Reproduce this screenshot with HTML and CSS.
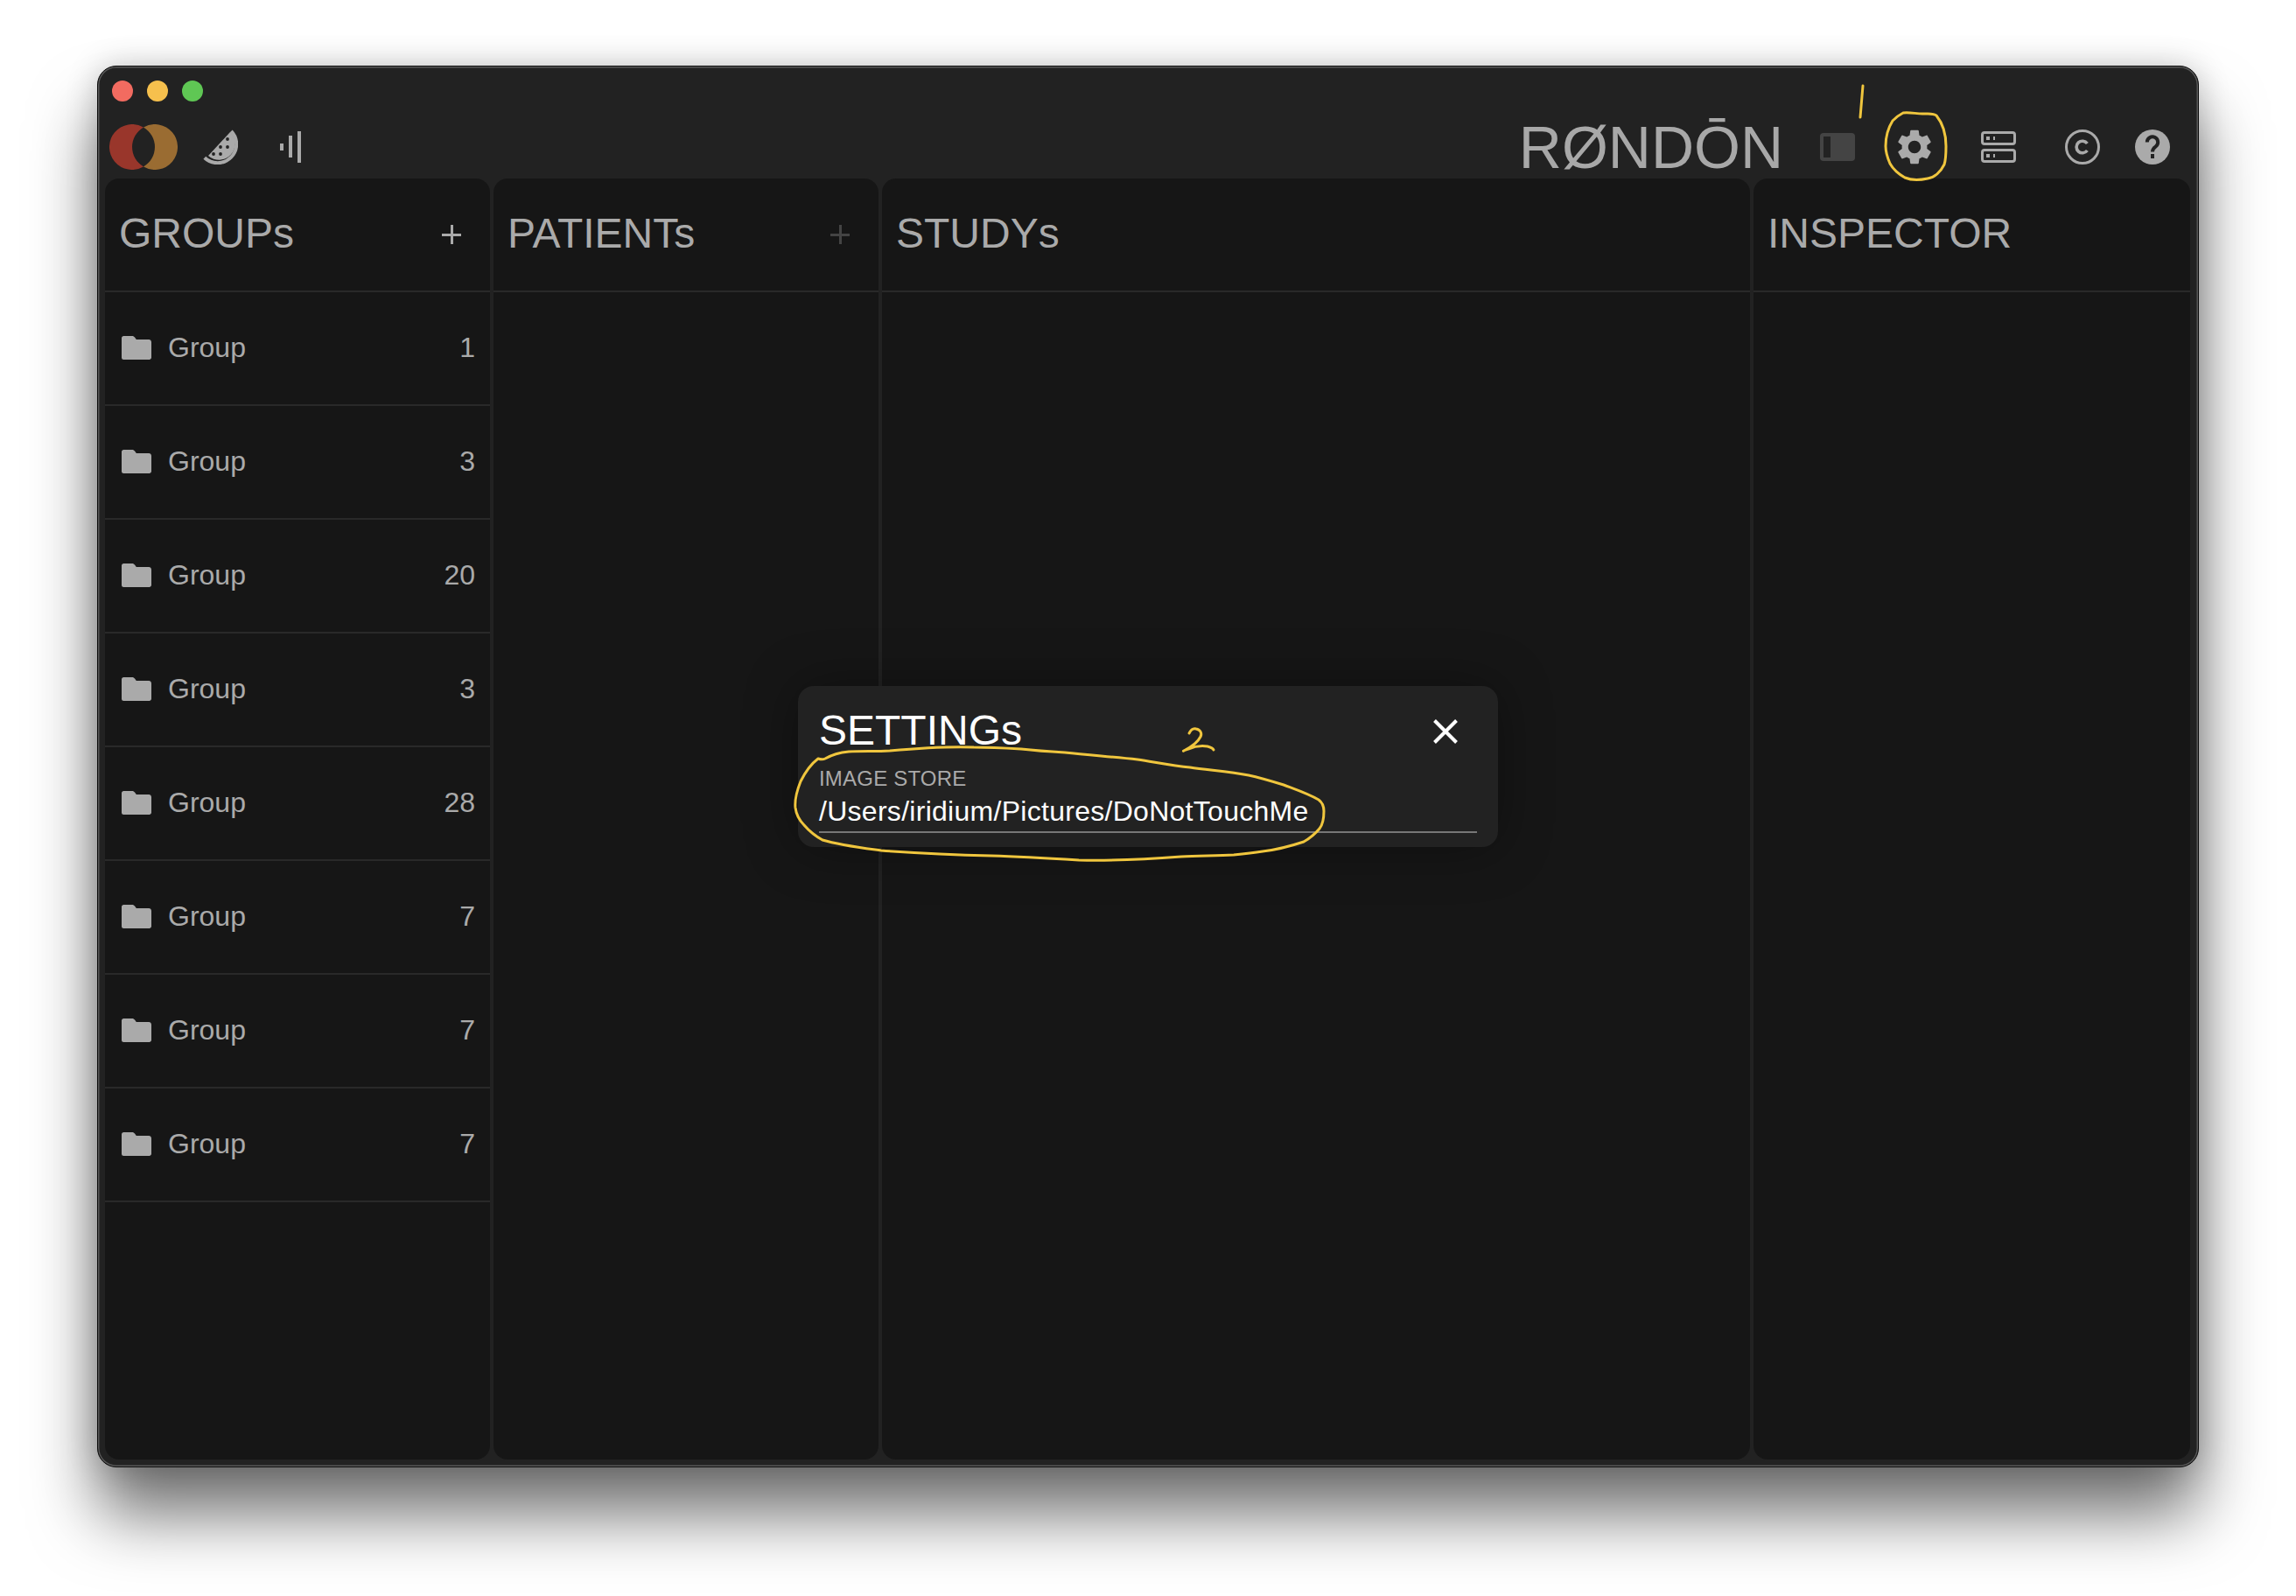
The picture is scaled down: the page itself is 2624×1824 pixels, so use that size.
FILE: index.html
```html
<!DOCTYPE html>
<html lang="en">
<head>
<meta charset="utf-8">
<title>RØNDŌN</title>
<link rel="stylesheet" href="styles.css">
</head>
<body>
<svg width="0" height="0" class="defs">
  <symbol id="folder" viewBox="0 0 34 27"><path d="M2.5 0H12c1.4 0 2.2.6 3 1.6L16.8 4H31c1.7 0 3 1.3 3 3v17.5c0 1.4-1.1 2.5-2.5 2.5h-29A2.5 2.5 0 0 1 0 24.5v-22A2.500 2.500 0 0 1 2.500 0z"/></symbol>
</svg>
<div class="window">
  <div class="titlebar">
    <span class="light red"></span><span class="light yellow"></span><span class="light green"></span>
  </div>
  <div class="toolbar">
    <div class="tools-left">
      <svg class="logo" viewBox="0 0 78 52"><path class="logo-red" d="M39 3.500A26 26 0 1 0 39 48.500A26 26 0 0 1 39 3.500z"/><path class="logo-orange" d="M39 3.500A26 26 0 1 1 39 48.500A26 26 0 0 0 39 3.500z"/></svg>
      <svg class="melon" viewBox="0 0 40 40"><path class="melon-rind" d="M32.200 1.800A21.500 21.500 0 0 1 1.800 32.200"/><path class="melon-flesh" d="M6 30L31 3A18.400 18.400 0 0 1 6 30z"/><circle class="seed" cx="20" cy="20" r="1.900"/><circle class="seed" cx="28" cy="11" r="1.900"/><circle class="seed" cx="28" cy="20" r="1.900"/><circle class="seed" cx="12" cy="28" r="1.900"/><circle class="seed" cx="20" cy="28" r="1.900"/></svg>
      <svg class="bars" viewBox="0 0 24 36"><rect x="0" y="14" width="4" height="8"/><rect x="10" y="5" width="4" height="25"/><rect x="20" y="0" width="4" height="36"/></svg>
    </div>
    <div class="tools-right">
      <span class="brand">RØNDŌN</span>
      <svg class="tool toggle" viewBox="0 0 40 32"><rect class="toggle-bg" width="40" height="32" rx="4"/><rect class="toggle-bar" x="4" y="4" width="8" height="24"/></svg>
      <svg class="tool gear" viewBox="0 0 24 24"><path d="M19.140 12.940c.04-.3.06-.61.06-.94 0-.32-.02-.64-.07-.94l2.030-1.580c.18-.14.23-.41.12-.61l-1.920-3.320c-.12-.22-.37-.29-.59-.22l-2.390.96c-.5-.38-1.030-.7-1.620-.94l-.36-2.540c-.04-.24-.24-.41-.48-.41h-3.840c-.24 0-.43.17-.47.41l-.36 2.540c-.59.24-1.130.57-1.620.94l-2.390-.96c-.22-.08-.47 0-.59.22L2.740 8.870c-.12.21-.08.47.12.61l2.030 1.580c-.05.3-.09.63-.09.94s.02.64.07.94l-2.030 1.580c-.18.14-.23.41-.12.61l1.920 3.320c.12.22.37.29.59.22l2.390-.96c.5.38 1.030.7 1.620.94l.36 2.540c.05.24.24.41.48.41h3.840c.24 0 .44-.17.47-.41l.36-2.540c.59-.24 1.130-.56 1.620-.94l2.390.96c.22.08.47 0 .59-.22l1.920-3.320c.12-.22.07-.47-.12-.61l-2.010-1.580zM12 15.600c-1.980 0-3.600-1.620-3.600-3.600s1.620-3.600 3.600-3.600 3.600 1.620 3.600 3.600-1.620 3.600-3.600 3.600z"/></svg>
      <svg class="tool server" viewBox="0 0 40 36"><rect class="outline" x="1.500" y="1.500" width="37" height="13" rx="2.500"/><rect class="outline" x="1.500" y="21.500" width="37" height="13" rx="2.500"/><rect x="6" y="6" width="4" height="4"/><rect x="14" y="6" width="2" height="4"/><rect x="6" y="26" width="4" height="4"/><rect x="14" y="26" width="2" height="4"/></svg>
      <svg class="tool copy" viewBox="0 0 40 40"><circle class="outline" cx="20" cy="20" r="18.500"/><path class="outline thick" d="M25.400 16A6.800 6.800 0 1 0 25.400 24"/></svg>
      <svg class="tool help" viewBox="0 0 40 40"><circle cx="20" cy="20" r="20"/><path class="help-mark" d="M13.800 14.500A6.200 6.200 0 1 1 23.500 19.600C21 21.300 20 22.300 20 25.500"/><rect class="help-dot" x="18" y="28" width="4" height="5"/></svg>
    </div>
  </div>
  <div class="panels">
    <section class="panel panel-groups">
      <header class="panel-head"><h2>GROUPs</h2><span class="plus"></span></header>
      <div class="row"><svg class="folder"><use href="#folder"/></svg><span class="row-name">Group</span><span class="row-count">1</span></div>
      <div class="row"><svg class="folder"><use href="#folder"/></svg><span class="row-name">Group</span><span class="row-count">3</span></div>
      <div class="row"><svg class="folder"><use href="#folder"/></svg><span class="row-name">Group</span><span class="row-count">20</span></div>
      <div class="row"><svg class="folder"><use href="#folder"/></svg><span class="row-name">Group</span><span class="row-count">3</span></div>
      <div class="row"><svg class="folder"><use href="#folder"/></svg><span class="row-name">Group</span><span class="row-count">28</span></div>
      <div class="row"><svg class="folder"><use href="#folder"/></svg><span class="row-name">Group</span><span class="row-count">7</span></div>
      <div class="row"><svg class="folder"><use href="#folder"/></svg><span class="row-name">Group</span><span class="row-count">7</span></div>
      <div class="row"><svg class="folder"><use href="#folder"/></svg><span class="row-name">Group</span><span class="row-count">7</span></div>
    </section>
    <section class="panel panel-patients">
      <header class="panel-head"><h2>PATIENTs</h2><span class="plus dim"></span></header>
    </section>
    <section class="panel panel-studies">
      <header class="panel-head"><h2>STUDYs</h2></header>
    </section>
    <section class="panel panel-inspector">
      <header class="panel-head"><h2>INSPECTOR</h2></header>
    </section>
  </div>
  <div class="dialog">
    <div class="dialog-head">
      <h1>SETTINGs</h1>
      <svg class="close" viewBox="0 0 28 28"><path d="M1.500 1.500L26.500 26.500M26.500 1.500L1.500 26.500"/></svg>
    </div>
    <div class="field-label">IMAGE STORE</div>
    <div class="field-value">/Users/iridium/Pictures/DoNotTouchMe</div>
  </div>
</div>
<svg class="ink" viewBox="0 0 2624 1824">
  <path d="M2129 98C2128 110 2127 122 2126 134"/>
  <path d="M2175 129C2182 128 2190 130 2197 130C2204 130 2210 129 2213 132C2221 142 2224 155 2224 167C2224 176 2224 182 2222 188C2218 196 2211 203 2203 204C2194 206 2184 206 2177 203C2170 199 2164 194 2160 187C2157 180 2155 174 2155 167C2155 156 2158 146 2163 138C2167 134 2171 131 2175 129Z"/>
  <path d="M1359 838C1361 834 1364 832 1367 833C1372 834 1374 838 1372 842C1369 848 1361 854 1353 858C1351 859 1354 857 1358 856C1365 853 1374 852 1380 853C1384 854 1386 855 1387 857"/>
  <path d="M935 867C938 868 941 868 943 867C950 863 960 860 970 859C985 858 1000 859 1017 858C1050 855 1085 853 1113 854C1133 854 1150 855 1167 856C1185 858 1200 859 1217 860C1245 863 1272 865 1300 868C1320 871 1340 875 1360 877C1380 880 1405 882 1427 886C1441 889 1454 893 1467 897C1480 902 1495 907 1507 914C1511 917 1513 922 1513 927C1513 935 1512 942 1508 947C1503 953 1497 958 1490 962C1475 967 1460 971 1443 973C1430 975 1420 976 1410 977C1390 978 1370 978 1350 979C1310 982 1270 984 1233 983C1200 981 1165 979 1133 978C1090 977 1048 975 1007 972C985 969 960 966 940 960C931 955 925 950 919 943C913 937 910 931 909 923C908 913 911 903 915 893C920 883 927 873 935 867Z"/>
</svg>
</body>
</html>
```

FILE: styles.css
```css
html, body {
  margin: 0;
  padding: 0;
  background: #fff;
}

body {
  width: 2624px;
  height: 1824px;
  overflow: hidden;
  position: relative;
  box-sizing: border-box;
  padding: 75px 0 0 111px;
  font-family: "Liberation Sans", Arial, sans-serif;
}

.defs {
  position: absolute;
}

.window {
  position: relative;
  box-sizing: border-box;
  width: 2402px;
  height: 1602px;
  display: flex;
  flex-direction: column;
  background: #222;
  border: 1px solid #0c0c0c;
  border-radius: 22px;
  box-shadow: inset 0 0 0 1.5px #585858, 0 55px 75px rgba(0, 0, 0, .55), 0 0 36px rgba(0, 0, 0, .2);
}

.titlebar {
  flex: none;
  height: 56px;
  box-sizing: border-box;
  padding-left: 16px;
  display: flex;
  align-items: center;
  gap: 16px;
}

.light {
  width: 24px;
  height: 24px;
  border-radius: 50%;
}

.red { background: #f26b60; }
.yellow { background: #f6c04d; }
.green { background: #5fc754; }

.toolbar {
  flex: none;
  height: 72px;
  box-sizing: border-box;
  padding: 0 32px 0 13px;
  display: flex;
  align-items: center;
  justify-content: space-between;
}

.tools-left,
.tools-right {
  display: flex;
  align-items: center;
}

.logo {
  width: 78px;
  height: 52px;
}

.logo-red { fill: #99362b; }
.logo-orange { fill: #9a6c32; }

.melon {
  width: 40px;
  height: 40px;
  margin-left: 29px;
}

.melon-rind {
  fill: none;
  stroke: #aaa;
  stroke-width: 4;
}

.melon-flesh { fill: #aaa; }
.seed { fill: #222; }

.bars {
  width: 24px;
  height: 36px;
  margin-left: 48px;
  fill: #aaa;
}

.brand {
  font-size: 68px;
  line-height: 72px;
  color: #a8a8a8;
  white-space: nowrap;
}

.tool {
  flex: none;
  fill: #aaa;
}

.toggle {
  width: 40px;
  height: 32px;
  margin-left: 42px;
}

.toggle-bg { fill: #444; }
.toggle-bar { fill: #222; }

.gear {
  width: 48px;
  height: 48px;
  margin-left: 44px;
}

.server {
  width: 40px;
  height: 36px;
  margin-left: 52px;
}

.copy {
  width: 40px;
  height: 40px;
  margin-left: 56px;
}

.help {
  width: 40px;
  height: 40px;
  margin-left: 40px;
}

.outline {
  fill: none;
  stroke: #aaa;
  stroke-width: 3;
}

.thick { stroke-width: 3.6; }

.help-mark {
  fill: none;
  stroke: #222;
  stroke-width: 4;
}

.help-dot { fill: #222; }

.panels {
  flex: 1;
  min-height: 0;
  box-sizing: border-box;
  padding: 0 9px 8px 8px;
  display: flex;
  gap: 4px;
}

.panel {
  background: #161616;
  border-radius: 16px;
  overflow: hidden;
}

.panel-groups { width: 440px; }
.panel-patients { width: 440px; }
.panel-studies { width: 992px; }
.panel-inspector { flex: 1; }

.panel-head {
  box-sizing: border-box;
  height: 130px;
  padding: 0 33px 2px 16px;
  border-bottom: 2px solid #292929;
  display: flex;
  align-items: center;
  justify-content: space-between;
}

.panel-head h2 {
  margin: 0;
  font-size: 48px;
  font-weight: 400;
  line-height: 56px;
  color: #aaa;
}

.plus {
  width: 22px;
  height: 22px;
  margin-top: 2px;
  background: linear-gradient(#aaa, #aaa) center / 100% 3px no-repeat, linear-gradient(#aaa, #aaa) center / 3px 100% no-repeat;
}

.plus.dim {
  background: linear-gradient(#444, #444) center / 100% 3px no-repeat, linear-gradient(#444, #444) center / 3px 100% no-repeat;
}

.row {
  box-sizing: border-box;
  height: 130px;
  padding: 0 17px 2px 19px;
  border-bottom: 2px solid #292929;
  display: flex;
  align-items: center;
  font-size: 32px;
  color: #aaa;
}

.folder {
  flex: none;
  width: 34px;
  height: 27px;
  fill: #aaa;
}

.row-name {
  margin-left: 19px;
}

.row-count {
  margin-left: auto;
}

.dialog {
  position: absolute;
  inset: 0;
  margin: auto;
  box-sizing: border-box;
  width: 800px;
  height: 184px;
  padding: 24px 24px 16px;
  background: #222;
  border-radius: 18px;
  box-shadow: 0 0 60px rgba(0, 0, 0, .35);
}

.dialog-head {
  height: 54px;
  display: flex;
  align-items: flex-start;
  justify-content: space-between;
}

.dialog-head h1 {
  margin: 0;
  font-size: 48px;
  font-weight: 400;
  line-height: 54px;
  color: #fff;
}

.close {
  width: 28px;
  height: 28px;
  margin: 14px 22px 0 0;
  fill: none;
  stroke: #fff;
  stroke-width: 4;
}

.field-label {
  margin-top: 14px;
  font-size: 24px;
  line-height: 28px;
  letter-spacing: .2px;
  color: #aaa;
}

.field-value {
  box-sizing: border-box;
  height: 48px;
  padding-top: 5px;
  border-bottom: 2px solid #777;
  font-size: 32px;
  line-height: 36px;
  letter-spacing: .28px;
  color: #fff;
}

.ink {
  position: absolute;
  left: 0;
  top: 0;
  width: 2624px;
  height: 1824px;
  pointer-events: none;
  fill: none;
  stroke: #f0c63e;
  stroke-width: 3;
  stroke-linecap: round;
  stroke-linejoin: round;
}
```
